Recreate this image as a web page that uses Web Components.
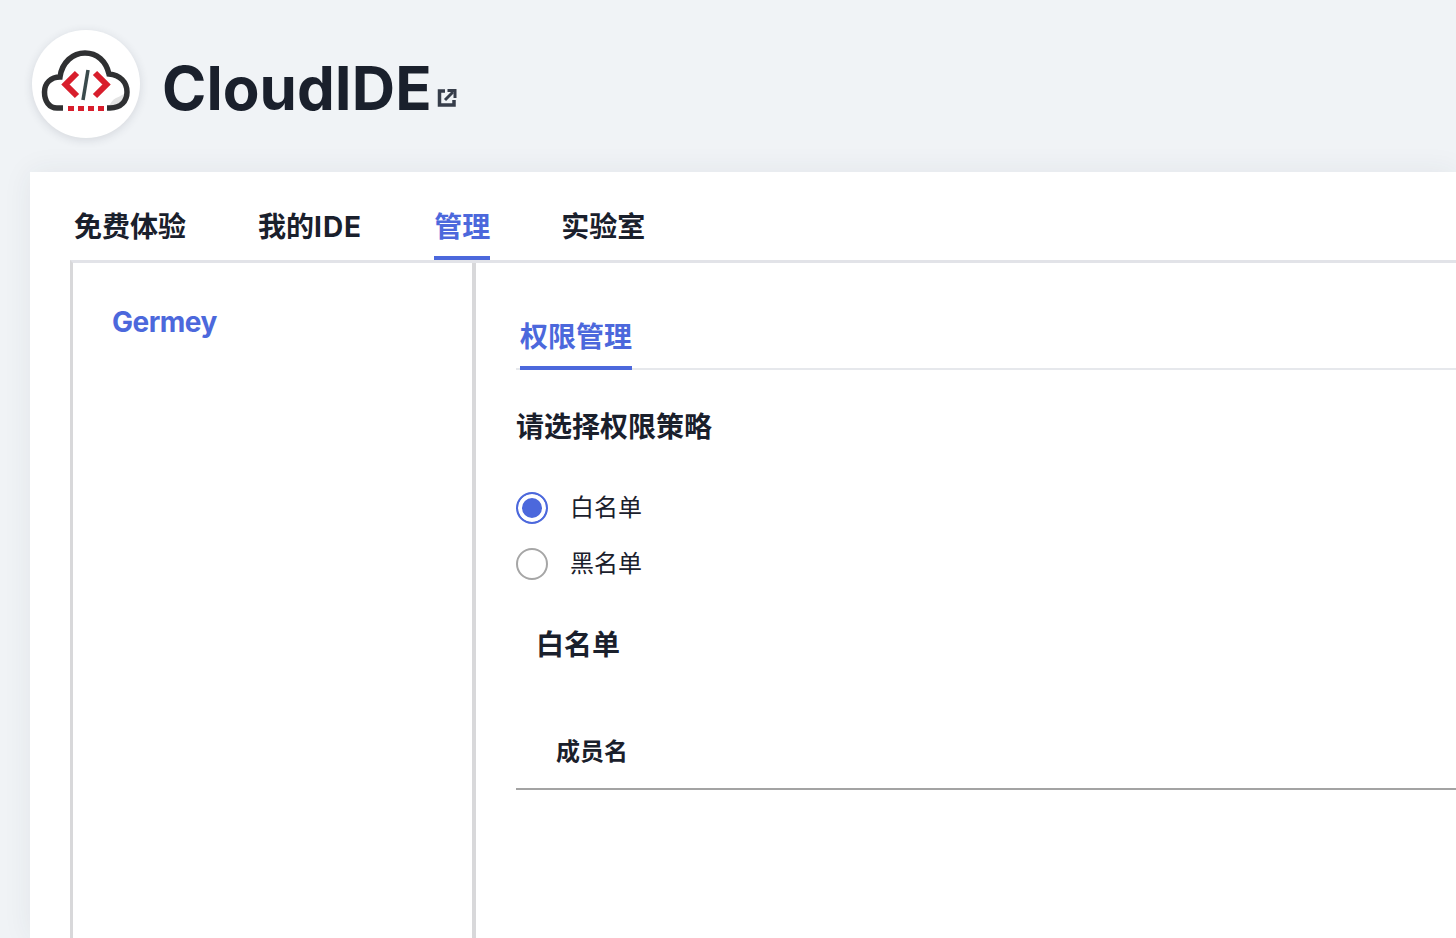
<!DOCTYPE html>
<html lang="zh">
<head>
<meta charset="utf-8">
<title>CloudIDE</title>
<style>
  html, body { margin: 0; height: 100%; overflow: hidden; }
  body {
    background: #f0f3f6;
    color: #1a202c;
    font-family: Inter, "Noto Sans CJK SC", sans-serif;
  }
  .latin { letter-spacing: 1px; }
</style>
</head>
<body>
<site-header>CloudIDE</site-header>
<main-card>
  <nav-tabs>
    <nav-tab>免费体验</nav-tab>
    <nav-tab>我的<span class="latin">IDE</span></nav-tab>
    <nav-tab active>管理</nav-tab>
    <nav-tab style="margin-left: -1px">实验室</nav-tab>
  </nav-tabs>
  <split-box>
    <side-panel slot="side">Germey</side-panel>
    <perm-panel>
      <sub-tab>权限管理</sub-tab>
      <section-title>请选择权限策略</section-title>
      <radio-option checked>白名单</radio-option>
      <radio-option>黑名单</radio-option>
      <list-title>白名单</list-title>
      <table-head>成员名</table-head>
    </perm-panel>
  </split-box>
</main-card>

<script>
// Small helper, each element is just a shadow root with a style and markup
function define( name, html ) {
  customElements.define( name, class extends HTMLElement {
    constructor() {
      super();
      const template = document.createElement( 'template' );
      template.innerHTML = html;
      this.attachShadow( {mode: 'open'} ).appendChild( template.content.cloneNode( true ) );
    }
  } );
}

define( 'site-logo', `
  <style>
    :host {
      display: block;
      width: 108px;
      height: 108px;
      border-radius: 50%;
      background: #fff;
      box-shadow: 0 2px 10px rgba(40, 50, 70, .14);
      flex: none;
    }
    svg { display: block; filter: blur(.6px); }
  </style>
  <svg width="108" height="108" viewBox="0 0 108 108" fill="none">
    <path d="M80 78C89 78 94 72 94 63C93 63 89 66 84 68C80 70 78 74 76 78Z" fill="#e4e4e4"/>
    <path d="M31 78H25C17 78 12.500 71 12.500 62C12.500 53 19 47 28 47C30 32 41 23 53 23C65 23 74 31 77 44C88 45 95 52 95 62C95 71 89 78 78 78H75" stroke="#2f3032" stroke-width="5.500"/>
    <path d="M45 43L33.500 54.500L45 66" stroke="#d81e2c" stroke-width="6"/>
    <path d="M63 43L74.500 54.500L63 66" stroke="#d81e2c" stroke-width="6"/>
    <path d="M56 40L51 70" stroke="#3a4a4c" stroke-width="3.500"/>
    <g fill="#d81e2c">
      <rect x="36" y="76" width="6" height="5"/>
      <rect x="46" y="76" width="6" height="5"/>
      <rect x="56" y="76" width="6" height="5"/>
      <rect x="66" y="76" width="6" height="5"/>
    </g>
  </svg>
` );

define( 'site-header', `
  <style>
    :host {
      display: flex;
      align-items: center;
      box-sizing: border-box;
      height: 172px;
      padding: 0 0 4px 32px;
    }
    .name {
      margin: 8px 0 0 22px;
      font: 700 60px/1 Inter, sans-serif;
      letter-spacing: .05px;
      color: #1a202c;
    }
    svg { margin: 28px 0 0 5px; }
  </style>
  <site-logo></site-logo>
  <span class="name"><slot></slot></span>
  <svg width="20" height="20" viewBox="0 0 20 20" fill="none" stroke="#363d4a" stroke-width="3.500">
    <path d="M8 3H2.500V17H17V12"/>
    <path d="M8 12L16 4" stroke-width="3"/>
    <path d="M10.500 2.500H18V10" stroke-width="3"/>
  </svg>
` );

define( 'main-card', `
  <style>
    :host {
      display: block;
      box-sizing: border-box;
      margin-left: 30px;
      height: 766px;
      padding: 28px 0 0 40px;
      background: #fff;
      box-shadow: 0 0 28px rgba(40, 50, 70, .07);
    }
  </style>
  <slot></slot>
` );

define( 'nav-tabs', `
  <style>
    :host {
      display: flex;
      gap: 72px;
      height: 60px;
      padding-left: 4px;
    }
  </style>
  <slot></slot>
` );

define( 'nav-tab', `
  <style>
    :host {
      display: block;
      box-sizing: border-box;
      height: 60px;
      padding-top: 7px;
      font: 700 28px/40px Inter, "Noto Sans CJK SC", sans-serif;
      color: #1a202c;
    }
    :host([active]) {
      color: #4c68dc;
      border-bottom: 4px solid #4c68dc;
      position: relative;
    }
  </style>
  <slot></slot>
` );

define( 'split-box', `
  <style>
    :host {
      display: flex;
      height: 678px;
      border-top: 3px solid #e2e3e8;
      border-left: 3px solid #d8d8da;
    }
    .main {
      flex: 1;
      border-left: 4px solid #d8d8da;
      min-width: 0;
    }
  </style>
  <slot name="side"></slot>
  <div class="main"><slot></slot></div>
` );

define( 'side-panel', `
  <style>
    :host {
      display: block;
      box-sizing: border-box;
      width: 399px;
      padding: 38px 0 0 39px;
      font: 700 28px/42px Inter, sans-serif;
      letter-spacing: -.5px;
      color: #4c68dc;
    }
  </style>
  <slot></slot>
` );

define( 'perm-panel', `
  <style>
    :host {
      display: block;
      padding: 0 0 0 40px;
    }
  </style>
  <slot></slot>
` );

define( 'sub-tab', `
  <style>
    :host {
      display: block;
      box-sizing: border-box;
      height: 107px;
      padding: 53px 0 0 4px;
      border-bottom: 2px solid #e6e8ec;
      font: 700 28px/42px Inter, "Noto Sans CJK SC", sans-serif;
      color: #4c68dc;
      position: relative;
    }
    span {
      display: inline-block;
      height: 54px;
      box-sizing: border-box;
      border-bottom: 4px solid #4c68dc;
    }
  </style>
  <span><slot></slot></span>
` );

define( 'section-title', `
  <style>
    :host {
      display: block;
      margin-top: 36px;
      margin-bottom: 32px;
      font: 700 28px/42px Inter, "Noto Sans CJK SC", sans-serif;
      color: #1a202c;
    }
  </style>
  <slot></slot>
` );

define( 'radio-option', `
  <style>
    :host {
      display: flex;
      align-items: center;
      gap: 22px;
      height: 56px;
      font: 400 24px/36px Inter, "Noto Sans CJK SC", sans-serif;
      color: #1a202c;
    }
    .dot {
      box-sizing: border-box;
      width: 32px;
      height: 32px;
      border-radius: 50%;
      border: 2px solid #a6a6a6;
      background: #fff;
    }
    :host([checked]) .dot {
      border-color: #4c68dc;
      background: #4c68dc;
      box-shadow: inset 0 0 0 4px #fff;
    }
  </style>
  <span class="dot"></span>
  <slot></slot>
` );

define( 'list-title', `
  <style>
    :host {
      display: block;
      margin-top: 32px;
      padding-left: 20px;
      font: 700 28px/42px Inter, "Noto Sans CJK SC", sans-serif;
      color: #1a202c;
    }
  </style>
  <slot></slot>
` );

define( 'table-head', `
  <style>
    :host {
      display: block;
      box-sizing: border-box;
      height: 96px;
      margin-top: 28px;
      padding: 40px 0 0 40px;
      border-bottom: 2px solid #a3a3a3;
      font: 700 24px/36px Inter, "Noto Sans CJK SC", sans-serif;
      color: #1a202c;
    }
  </style>
  <slot></slot>
` );
</script>
</body>
</html>
